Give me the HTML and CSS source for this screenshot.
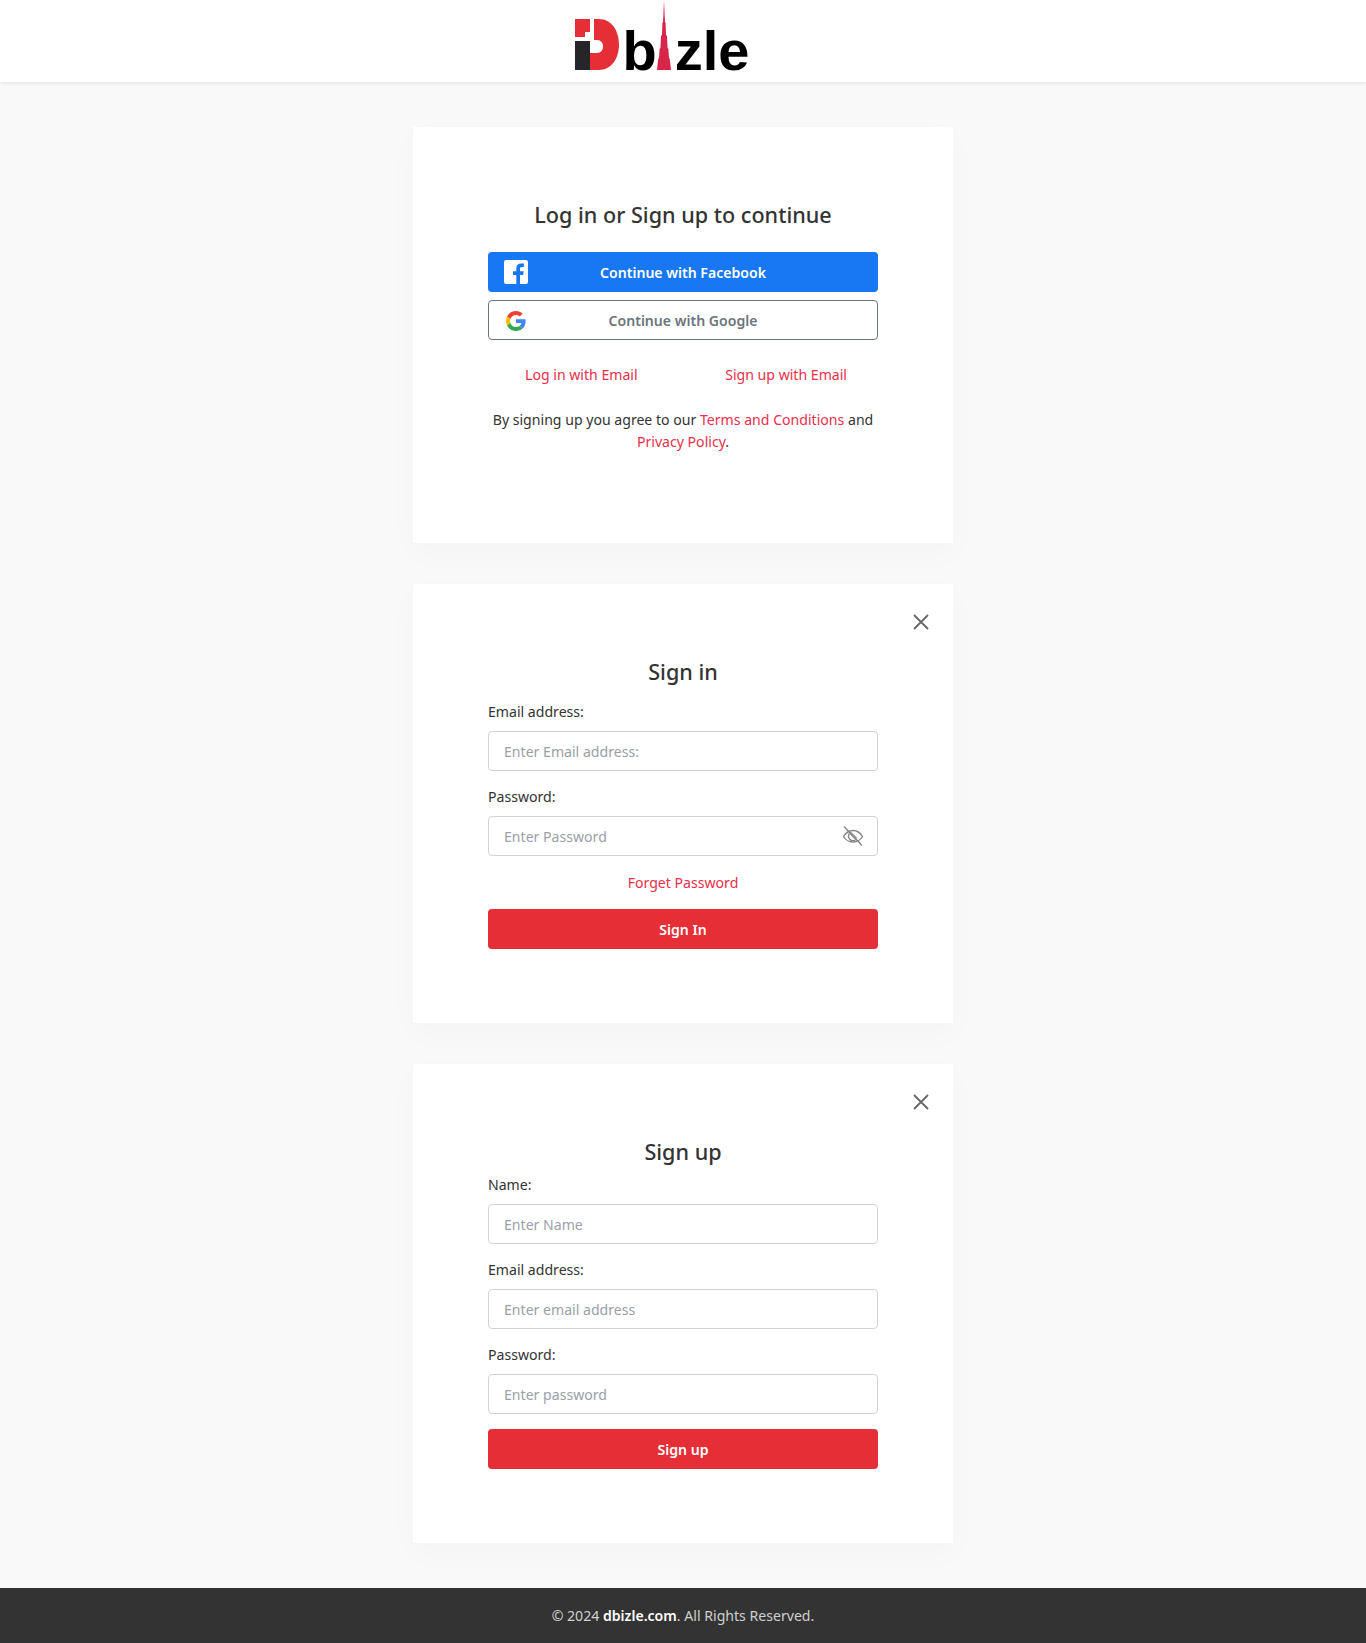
FILE: index.html
```html
<!DOCTYPE html>
<html lang="en">
<head>
    <meta charset="UTF-8">
    <meta name="viewport" content="width=device-width, initial-scale=1.0">
    <title>dbizle</title>
    <link rel="stylesheet" href="styles.css">
</head>
<body>
    <header class="site-header">
        <a class="logo" href="#">
            <svg class="logo-mark" width="44" height="51" viewBox="0 0 44 51">
                <path d="M0 0h15v13h-5v5H0z" fill="#e62e36"/>
                <path d="M0 22h15v29H0z" fill="#26262a"/>
                <path d="M19 0h5c12 0 20 11 20 25.500S36 51 24 51h-9V34h7c4 0 6-3 6-6.500S26 21 22 21h-3z" fill="#e62e36"/>
            </svg>
            <span class="logo-text">b</span>
            <svg class="logo-tower" width="16" height="70" viewBox="0 0 16 70">
                <path d="M8 0l.5 12 .5 10 .6 1 .4 12 1 1 .6 12 .8 1 .6 9 .8 1 1.200 11H1l1.200-11 .8-1 .6-9 .8-1 .6-12 1-1 .4-12 .6-1 .5-10z" fill="#d8254a"/>
            </svg>
            <span class="logo-text">zle</span>
        </a>
    </header>

    <main class="page">
        <!-- Continue options -->
        <section class="card">
            <h2 class="card-title">Log in or Sign up to continue</h2>
            <a class="btn btn-facebook" href="#">
                <svg class="btn-icon" width="24" height="24" viewBox="0 0 24 24">
                    <path d="M2 0h20a2 2 0 0 1 2 2v20a2 2 0 0 1-2 2h-6v-9h3.200l.5-3.800H16V8.800c0-1.100.4-1.800 1.900-1.800h2V3.600c-.4-.1-1.500-.2-2.800-.2-2.800 0-4.800 1.700-4.800 4.900v2.900H9V15h3.300v9H2a2 2 0 0 1-2-2V2a2 2 0 0 1 2-2z" fill="#fff"/>
                </svg>
                Continue with Facebook
            </a>
            <a class="btn btn-google" href="#">
                <svg class="btn-icon" width="20" height="20" viewBox="0 0 48 48">
                    <path fill="#ea4335" d="M24 9.500c3.500 0 6.700 1.300 9.100 3.500l6.800-6.800C35.800 2.400 30.200 0 24 0 14.600 0 6.500 5.400 2.600 13.200l7.900 6.200C12.400 13.600 17.700 9.500 24 9.500z"/>
                    <path fill="#4285f4" d="M46.980 24.550c0-1.570-.15-3.090-.38-4.550H24v9.020h12.940c-.58 2.960-2.260 5.480-4.780 7.180l7.730 6c4.510-4.180 7.090-10.360 7.090-17.650z"/>
                    <path fill="#fbbc05" d="M10.530 28.590c-.48-1.450-.76-2.990-.76-4.590s.27-3.140.76-4.590l-7.980-6.190C.92 16.460 0 20.120 0 24c0 3.880.92 7.540 2.560 10.780l7.970-6.190z"/>
                    <path fill="#34a853" d="M24 48c6.480 0 11.930-2.130 15.890-5.810l-7.730-6c-2.150 1.450-4.920 2.300-8.160 2.300-6.260 0-11.570-4.220-13.470-9.910l-7.980 6.190C6.510 42.620 14.620 48 24 48z"/>
                </svg>
                Continue with Google
            </a>
            <div class="email-links">
                <a href="#">Log in with Email</a>
                <a href="#">Sign up with Email</a>
            </div>
            <p class="terms">By signing up you agree to our <a href="#">Terms and Conditions</a> and <a href="#">Privacy Policy</a>.</p>
        </section>

        <!-- Sign in -->
        <section class="card">
            <button class="close-btn" aria-label="Close">
                <svg width="16" height="16" viewBox="0 0 16 16"><path d="M1 1l14 14M15 1L1 15" stroke="#666" stroke-width="1.800" fill="none"/></svg>
            </button>
            <h2 class="card-title title-signin">Sign in</h2>
            <div class="form-group">
                <label for="signin-email">Email address:</label>
                <input type="text" id="signin-email" placeholder="Enter Email address:">
            </div>
            <div class="form-group">
                <label for="signin-password">Password:</label>
                <div class="password-box">
                    <input type="password" id="signin-password" placeholder="Enter Password">
                    <svg class="eye-icon" width="22" height="22" viewBox="0 0 22 22" fill="none" stroke="#858585" stroke-width="1.400">
                        <path d="M1.500 11.500C4 7.500 7 5.500 11 5.500s7 2 9.500 6c-2.500 4-5.500 5.500-9.500 5.500s-7-1.500-9.500-5.500z"/>
                        <path d="M7.500 8.500a4.500 4.500 0 0 0 6 6.500" />
                        <path d="M7.500 7l7 7" stroke="#aaa" stroke-width="3"/>
                        <path d="M2 1.500l18 19"/>
                    </svg>
                </div>
            </div>
            <a class="forget-link" href="#">Forget Password</a>
            <button class="btn-submit">Sign In</button>
        </section>

        <!-- Sign up -->
        <section class="card">
            <button class="close-btn" aria-label="Close">
                <svg width="16" height="16" viewBox="0 0 16 16"><path d="M1 1l14 14M15 1L1 15" stroke="#666" stroke-width="1.800" fill="none"/></svg>
            </button>
            <h2 class="card-title title-signup">Sign up</h2>
            <div class="form-group">
                <label for="signup-name">Name:</label>
                <input type="text" id="signup-name" placeholder="Enter Name">
            </div>
            <div class="form-group">
                <label for="signup-email">Email address:</label>
                <input type="text" id="signup-email" placeholder="Enter email address">
            </div>
            <div class="form-group">
                <label for="signup-password">Password:</label>
                <input type="password" id="signup-password" placeholder="Enter password">
            </div>
            <button class="btn-submit">Sign up</button>
        </section>
    </main>

    <footer class="site-footer">
        <p>© 2024 <strong>dbizle.com</strong>. All Rights Reserved.</p>
    </footer>
</body>
</html>
```

FILE: styles.css
```css
* {
    margin: 0;
    padding: 0;
    box-sizing: border-box;
    font-family: 'Noto Sans', sans-serif;
}

body {
    background: #f9f9f9;
    color: #333;
    font-size: 14.1px;
    line-height: 22px;
}

a {
    color: #e8304a;
    text-decoration: none;
}

.site-header {
    height: 82px;
    background: #fff;
    box-shadow: 0 1px 4px rgba(0, 0, 0, 0.1);
    display: flex;
    justify-content: center;
}

.logo {
    display: flex;
    align-items: flex-end;
    height: 70px;
    margin-right: 41.700px;
}

.logo-mark {
    margin-right: 3.500px;
}

.logo-text {
    font-family: 'Liberation Sans', sans-serif;
    font-weight: 700;
    font-size: 56px;
    line-height: 55px;
    height: 47px;
    color: #000;
}

.logo-tower {
    margin: 0 2.500px 0 -0.500px;
}

.page {
    padding: 45px 0;
}

.card {
    position: relative;
    width: 540px;
    margin: 0 auto 41px;
    padding: 74px 75px;
    background: #fff;
    box-shadow: 0 10px 30px rgba(0, 0, 0, 0.025);
}

.card:last-child {
    margin-bottom: 0;
}

.card-title {
    font-size: 21.6px;
    line-height: 30px;
    font-weight: 500;
    text-align: center;
    margin-top: -1px;
    margin-bottom: 22px;
}

.title-signin {
    margin-bottom: 14px;
}

.title-signup {
    margin-bottom: 7px;
}

.btn {
    position: relative;
    display: flex;
    align-items: center;
    justify-content: center;
    height: 40px;
    padding-top: 1px;
    border-radius: 4px;
    font-size: 14.1px;
    font-weight: 600;
}

.btn-facebook {
    background: #1877f2;
    color: #fff;
    margin-bottom: 8px;
}

.btn-google {
    border: 1px solid #6c757d;
    color: #6c757d;
}

.btn-icon {
    position: absolute;
    left: 16px;
    top: 50%;
    transform: translateY(-50%);
}

.btn-google .btn-icon {
    left: 17px;
    margin-top: 1px;
}

.email-links {
    display: flex;
    justify-content: space-between;
    margin-top: 24px;
    padding: 0 31px 0 37px;
}

.terms {
    margin-top: 23px;
    margin-bottom: 16px;
    text-align: center;
}

.close-btn {
    position: absolute;
    top: 30px;
    right: 24px;
    background: none;
    border: none;
    display: flex;
    cursor: pointer;
}

.form-group {
    margin-bottom: 15px;
}

.form-group label {
    display: block;
    margin-bottom: 8px;
}

.form-group input {
    display: block;
    width: 100%;
    height: 40px;
    padding: 1px 15px 0;
    font-size: 14.1px;
    color: #333;
    background: #fff;
    border: 1px solid #ced4da;
    border-radius: 4px;
    outline: none;
}

.form-group input::placeholder {
    color: #9a9fa8;
}

.password-box {
    position: relative;
}

.eye-icon {
    position: absolute;
    top: 9px;
    right: 14px;
}

.forget-link {
    display: block;
    text-align: center;
    margin-top: 16px;
    margin-bottom: 15px;
}

.btn-submit {
    display: block;
    width: 100%;
    height: 40px;
    padding-top: 1px;
    background: #e62e36;
    color: #fff;
    border: none;
    border-radius: 4px;
    font-size: 14.1px;
    font-weight: 600;
    cursor: pointer;
}

.site-footer {
    height: 55px;
    background: #333;
    color: #d0d0d0;
    display: flex;
    align-items: center;
    justify-content: center;
}

.site-footer strong {
    color: #fff;
    font-weight: 600;
}
```
